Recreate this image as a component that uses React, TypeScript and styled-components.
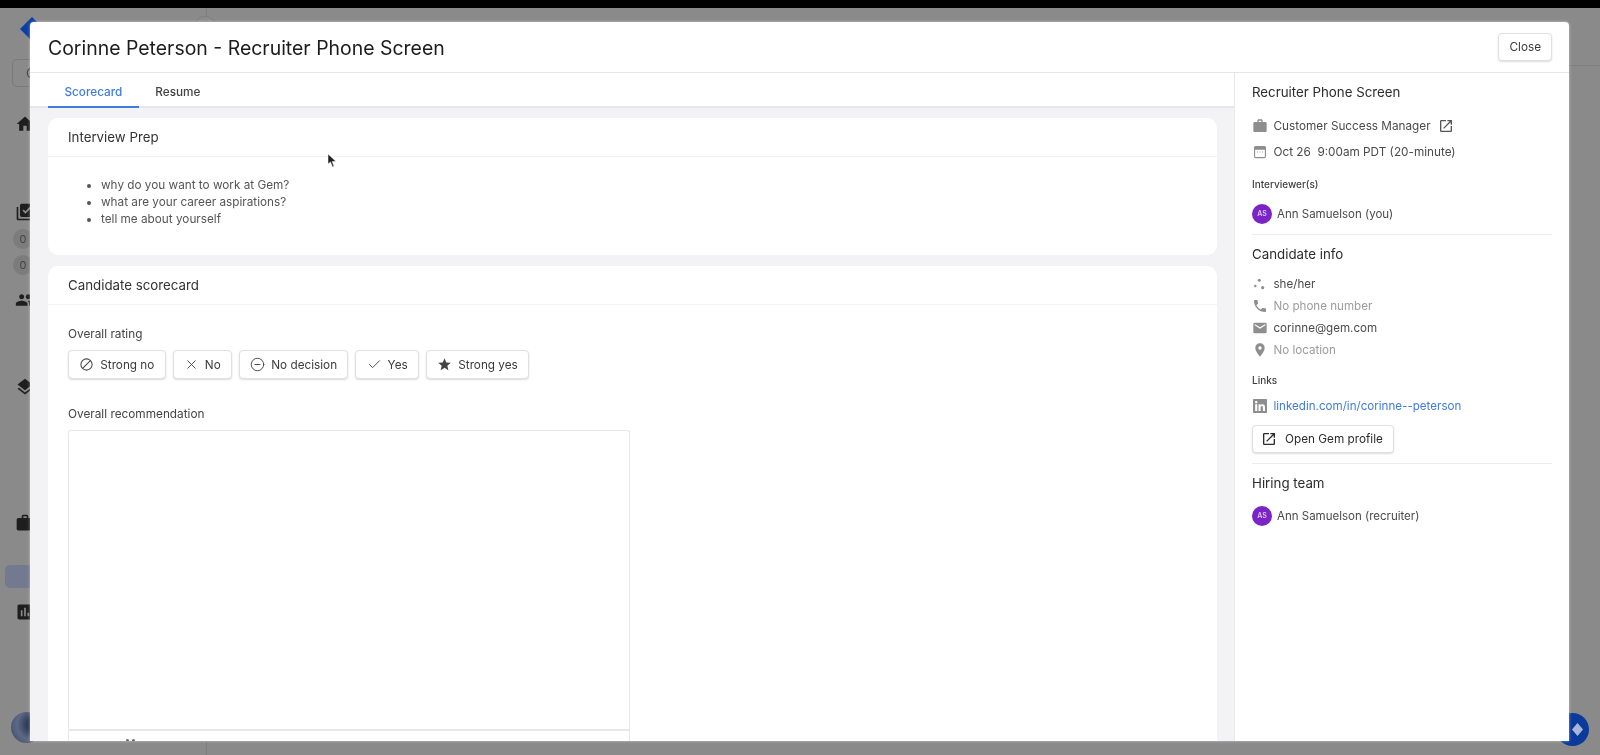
import React from "react";
import styled, { createGlobalStyle } from "styled-components";
import {
  MdHome, MdLibraryAddCheck, MdPeople, MdLayers, MdWork, MdAssessment, MdOpenInNew,
  MdLocalPhone, MdEmail, MdPlace, MdStar,
} from "react-icons/md";
import { FaLinkedin } from "react-icons/fa";
import { X, Check, CircleMinus } from "lucide-react";

const Global = createGlobalStyle`
  html, body { margin: 0; padding: 0; background: #000; overflow: hidden; }
  * { box-sizing: border-box; }
  body { font-family: Inter, "Liberation Sans", sans-serif; -webkit-font-smoothing: antialiased; }
`;

const Page = styled.div`
  height: 755px; width: 1600px; position: relative; display: flex; flex-direction: column;
  overflow: hidden; filter: blur(0.35px);
`;
const BlackBar = styled.div`height: 8px; background: #000; flex: none;`;
const Backdrop = styled.div`flex: 1; display: flex; background: #8a8a8a; min-height: 0; position: relative;`;
const Rail = styled.nav`
  width: 207px; flex: none; border-right: 1px solid #7e7e7e; display: flex; flex-direction: column;
  padding-bottom: 12px; position: relative;
  &::after {
    content: ""; position: absolute; right: -11px; top: 8px; width: 22px; height: 22px;
    border-radius: 50%; background: #8d8d8d; border: 1px solid #7e7e7e;
  }
`;
const Logo = styled.svg`width: 24px; height: 24px; margin: 9px 0 0 20px; flex: none;`;
const RailSearch = styled.div`
  height: 28px; margin: 18px 16px 0 12px; border: 1px solid #7a7a7a; border-radius: 5px;
  color: #444; font-size: 13px; line-height: 26px; padding-left: 13px; flex: none;
`;
const RailIcon = styled.div<{ $top: number }>`
  margin: ${(p) => p.$top}px 0 0 15px; width: 20px; height: 20px; flex: none; color: #1e1e1e;
  svg { display: block; width: 20px; height: 20px; }
`;
const RailBadge = styled.div<{ $top: number }>`
  margin: ${(p) => p.$top}px 0 0 13px; width: 20px; height: 20px; border-radius: 50%;
  background: #7c7c7c; color: #444; font-size: 11px; line-height: 20px; text-align: center; flex: none;
`;
const RailHighlight = styled.div`
  margin: 32px 16px 0 5px; height: 23px; border-radius: 5px; background: #737a90; flex: none;
`;
const RailAvatar = styled.div`
  margin: auto 0 0 11px; width: 31px; height: 31px; border-radius: 50%; flex: none;
  background: radial-gradient(circle at 70% 40%, #2e3a55 20%, #5d6a86 55%, #39435e 100%);
`;
const Main = styled.div`flex: 1; min-width: 0;`;
const MainTop = styled.div`height: 58px; border-bottom: 1px solid #7f7f7f;`;
const Fab = styled.div`
  position: absolute; left: 1556px; top: 705px; width: 33px; height: 33px; border-radius: 50%;
  background: #0c3a9c; display: flex; align-items: center; justify-content: center;
  svg { width: 11px; height: 13px; margin-left: 9px; }
`;

const Modal = styled.section`
  position: absolute; left: 30px; top: 22px; width: 1539px; height: 719px;
  background: #fff; border-radius: 4px 4px 0 0; overflow: hidden; display: flex; flex-direction: column;
  box-shadow: 0 0 3px rgba(255,255,255,.55);
`;
const ModalHeader = styled.header`
  height: 51px; flex: none; border-bottom: 1px solid #e6e6e8; display: flex; align-items: center;
  justify-content: space-between; padding: 0 17px 0 18px;
`;
const ModalTitle = styled.h1`margin: 2px 0 0; font-size: 19.45px; font-weight: 400; color: #1c1c1e;`;
const Button = styled.button`
  height: 28px; padding: 0 10px; background: #fff; border: 1px solid #e0e0e3; border-radius: 4px;
  box-shadow: 0 1px 2px rgba(0,0,0,.14); font: 400 11.75px Inter, "Liberation Sans", sans-serif; color: #3a3a3c;
  display: inline-flex; align-items: center; gap: 6px; flex: none;
  svg { width: 16px; height: 16px; flex: none; }
`;
const ModalBody = styled.div`flex: 1; display: flex; min-height: 0;`;
const LeftColumn = styled.div`flex: 1; min-width: 0; display: flex; flex-direction: column; background: #f3f3f6;`;
const Tabs = styled.div`
  height: 35px; flex: none; background: #fff; border-bottom: 2px solid #e7e7ea; display: flex; padding-left: 18px;
`;
const Tab = styled.div<{ $active?: boolean }>`
  height: 35px; padding: 4px 16.5px 0; display: flex; align-items: center;
  font-size: 11.75px; font-weight: 500; color: ${(p) => (p.$active ? "#3f7bdc" : "#444")};
  border-bottom: 2px solid ${(p) => (p.$active ? "#3f7bdc" : "transparent")};
`;
const Cards = styled.div`
  flex: 1; min-height: 0; overflow: hidden; padding: 10px 17px 0 18px; display: flex; flex-direction: column; gap: 11px;
`;
const Card = styled.article`background: #fff; border-radius: 10px; flex: none;`;
const CardHeader = styled.div`
  height: 39px; padding: 0 20px 1px; border-bottom: 1px solid #f3f3f5; display: flex; align-items: center;
  font-size: 13.3px; color: #333;
`;
const Questions = styled.ul`
  margin: 0; padding: 20px 0 27px 53px; font-size: 11.75px; line-height: 17px; color: #555;
`;
const ScoreBody = styled.div`padding: 21px 20px 0;`;
const FieldLabel = styled.div<{ $top?: number }>`
  margin-top: ${(p) => p.$top ?? 0}px; height: 16px; line-height: 16px; font-size: 11.8px; color: #444;
`;
const Ratings = styled.div`display: flex; gap: 7px; margin-top: 8px;`;
const RatingButton = styled(Button)`height: 29px; padding: 0 10.25px; svg { width: 15px; height: 15px; color: #444; }`;
const Editor = styled.div`
  width: 562px; margin-top: 8px; border: 1.5px solid #e8e8ea; border-bottom: 0; border-radius: 3px 3px 0 0;
`;
const EditorArea = styled.div`height: 300px; border-bottom: 2px solid #e8e8ea;`;
const EditorTools = styled.div`
  height: 40px; display: flex; gap: 3px; padding: 8px 0 0 57px;
  span { width: 3px; height: 3px; border-radius: 50%; background: #666; }
`;

const RightColumn = styled.aside`
  width: 335px; flex: none; border-left: 1px solid #e8e8ea; padding: 9px 17px 0; color: #4a4a4c;
`;
const SideTitle = styled.h2<{ $top?: number }>`
  margin: ${(p) => p.$top ?? 0}px 0 0; height: 20px; line-height: 20px; font-size: 13.3px; font-weight: 400; color: #2c2c2e;
`;
const SideLabel = styled.div<{ $top: number }>`
  margin-top: ${(p) => p.$top}px; height: 14px; line-height: 14px; font-size: 10px; font-weight: 500; color: #3f3f41;
`;
const MetaList = styled.div`margin-top: 11px;`;
const MetaRow = styled.div`
  height: 26px; display: flex; align-items: center; gap: 5.5px; font-size: 11.75px;
  svg { width: 16px; height: 16px; color: #8e8e90; flex: none; }
`;
const ExternalIcon = styled.span`display: flex; margin-left: 2px; svg { color: #555; }`;
const ContactList = styled.div<{ $top: number }>`margin-top: ${(p) => p.$top}px;`;
const ContactRow = styled.div<{ $muted?: boolean }>`
  height: 22px; display: flex; align-items: center; gap: 5.5px; font-size: 11.6px;
  color: ${(p) => (p.$muted ? "#9c9c9e" : "#4a4a4c")};
  svg { width: 16px; height: 16px; color: #8e8e90; flex: none; }
`;
const LinkText = styled.a`color: #3f7bdc; text-decoration: none;`;
const PersonRow = styled.div<{ $top: number }>`
  margin-top: ${(p) => p.$top}px; height: 20px; display: flex; align-items: center; gap: 5px; font-size: 11.5px;
`;
const Avatar = styled.span`
  width: 20px; height: 20px; border-radius: 50%; background: #7a24c8; color: #ddc8f2; font-size: 7px; font-weight: 600;
  display: flex; align-items: center; justify-content: center; flex: none;
`;
const Rule = styled.hr<{ $top: number }>`
  margin: ${(p) => p.$top}px 0 0; border: 0; border-top: 1px solid #ececee;
`;
const ProfileButton = styled(Button)`margin-top: 8px; padding: 0 10px 0 8px; color: #2c2c2e; gap: 8px;`;
const Cursor = styled.svg`position: absolute; left: 328px; top: 154px; width: 9px; height: 14px;`;

const PronounIcon = () => (
  <svg viewBox="0 0 16 16" fill="currentColor">
    <circle cx="7.3" cy="4.3" r="1.5" /><circle cx="3.3" cy="10" r="1.2" /><circle cx="10.7" cy="11.7" r="1.6" />
  </svg>
);
const CalendarIcon = () => (
  <svg viewBox="0 0 16 16" fill="none">
    <rect x="2.6" y="2.6" width="10.8" height="11" rx="1" stroke="currentColor" strokeWidth="1.1" />
    <rect x="2.6" y="2.6" width="10.8" height="3.2" fill="currentColor" />
    <path d="M5 8h1M7.5 8h1M10 8h1" stroke="currentColor" strokeWidth="0.9" />
  </svg>
);
const StrongNoIcon = () => (
  <svg viewBox="0 0 16 16" fill="none" stroke="currentColor" strokeWidth="1.1">
    <circle cx="8" cy="8" r="6" /><path d="M3.9 12.1 12.1 3.9" />
  </svg>
);

export default function App() {
  return (
    <>
      <Global />
      <Page>
        <BlackBar />
        <Backdrop>
          <Rail>
            <Logo viewBox="0 0 24 24"><polygon points="0,12 12,0 24,12 12,24" fill="#0b3fa6" /></Logo>
            <RailSearch>C</RailSearch>
            <RailIcon $top={27}><MdHome /></RailIcon>
            <RailIcon $top={68}><MdLibraryAddCheck /></RailIcon>
            <RailBadge $top={7}>0</RailBadge>
            <RailBadge $top={6}>0</RailBadge>
            <RailIcon $top={15}><MdPeople /></RailIcon>
            <RailIcon $top={67}><MdLayers /></RailIcon>
            <RailIcon $top={116}><MdWork /></RailIcon>
            <RailHighlight />
            <RailIcon $top={14}><MdAssessment /></RailIcon>
            <RailAvatar />
          </Rail>
          <Main><MainTop /></Main>
          <Fab><svg viewBox="0 0 12 14"><polygon points="0,7 6,0 12,7 6,14" fill="#a8b6d8" /></svg></Fab>
        </Backdrop>
        <Modal>
          <ModalHeader>
            <ModalTitle>Corinne Peterson - Recruiter Phone Screen</ModalTitle>
            <Button>Close</Button>
          </ModalHeader>
          <ModalBody>
            <LeftColumn>
              <Tabs>
                <Tab $active>Scorecard</Tab>
                <Tab>Resume</Tab>
              </Tabs>
              <Cards>
                <Card>
                  <CardHeader>Interview Prep</CardHeader>
                  <Questions>
                    <li>why do you want to work at Gem?</li>
                    <li>what are your career aspirations?</li>
                    <li>tell me about yourself</li>
                  </Questions>
                </Card>
                <Card>
                  <CardHeader>Candidate scorecard</CardHeader>
                  <ScoreBody>
                    <FieldLabel>Overall rating</FieldLabel>
                    <Ratings>
                      <RatingButton><StrongNoIcon />Strong no</RatingButton>
                      <RatingButton><X strokeWidth={1.5} />No</RatingButton>
                      <RatingButton><CircleMinus strokeWidth={1.5} />No decision</RatingButton>
                      <RatingButton><Check strokeWidth={1.5} />Yes</RatingButton>
                      <RatingButton><MdStar />Strong yes</RatingButton>
                    </Ratings>
                    <FieldLabel $top={27}>Overall recommendation</FieldLabel>
                    <Editor>
                      <EditorArea />
                      <EditorTools><span /><span /></EditorTools>
                    </Editor>
                  </ScoreBody>
                </Card>
              </Cards>
            </LeftColumn>
            <RightColumn>
              <SideTitle>Recruiter Phone Screen</SideTitle>
              <MetaList>
                <MetaRow>
                  <MdWork />Customer Success Manager
                  <ExternalIcon><MdOpenInNew /></ExternalIcon>
                </MetaRow>
                <MetaRow><CalendarIcon />Oct 26&nbsp; 9:00am PDT (20-minute)</MetaRow>
              </MetaList>
              <SideLabel $top={12}>Interviewer(s)</SideLabel>
              <PersonRow $top={12.5}><Avatar>AS</Avatar>Ann Samuelson (you)</PersonRow>
              <Rule $top={10.5} />
              <SideTitle $top={9}>Candidate info</SideTitle>
              <ContactList $top={8.5}>
                <ContactRow><PronounIcon />she/her</ContactRow>
                <ContactRow $muted><MdLocalPhone />No phone number</ContactRow>
                <ContactRow><MdEmail />corinne@gem.com</ContactRow>
                <ContactRow $muted><MdPlace />No location</ContactRow>
              </ContactList>
              <SideLabel $top={12.5}>Links</SideLabel>
              <ContactList $top={8}>
                <ContactRow><FaLinkedin /><LinkText>linkedin.com/in/corinne--peterson</LinkText></ContactRow>
              </ContactList>
              <ProfileButton><MdOpenInNew />Open Gem profile</ProfileButton>
              <Rule $top={9.5} />
              <SideTitle $top={9.5}>Hiring team</SideTitle>
              <PersonRow $top={12.5}><Avatar>AS</Avatar>Ann Samuelson (recruiter)</PersonRow>
            </RightColumn>
          </ModalBody>
        </Modal>
        <Cursor viewBox="0 0 9 14"><polygon points="0,0 0,10 2.5,8 4.5,13 6,12.3 4.2,7.5 8,7.5" fill="#222" stroke="#fff" strokeWidth="0.5" /></Cursor>
      </Page>
    </>
  );
}
